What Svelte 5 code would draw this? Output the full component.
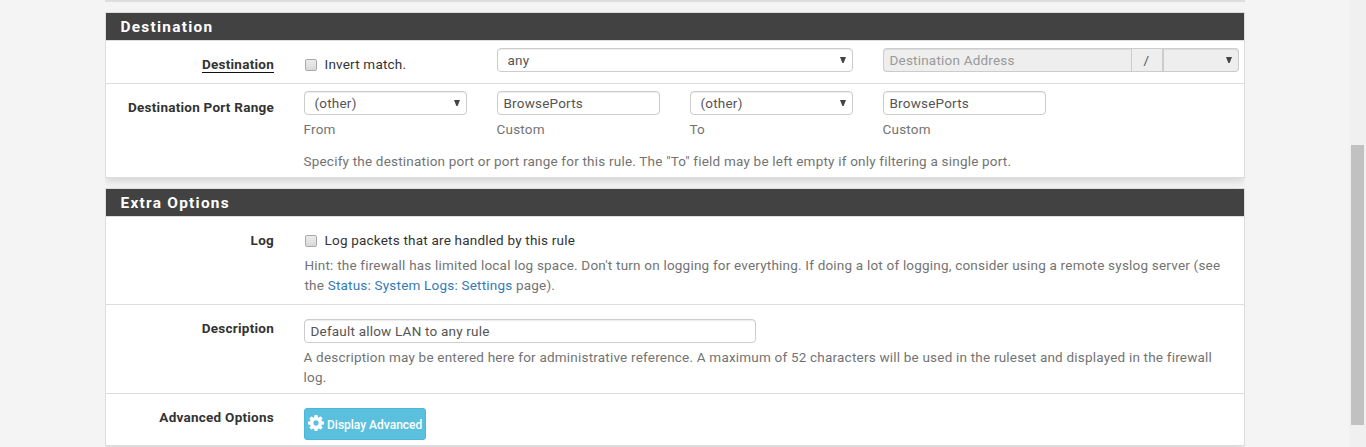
<script>
  const ports = [
    { kind: 'select', value: '(other)', help: 'From' },
    { kind: 'input', value: 'BrowsePorts', help: 'Custom' },
    { kind: 'select', value: '(other)', help: 'To' },
    { kind: 'input', value: 'BrowsePorts', help: 'Custom' }
  ];
</script>

{#snippet arrow()}
  <svg class="arrow" width="6" height="6" viewBox="0 0 6 6"><path d="M0 0H6L3.6 6H2.4Z" fill="#444" /></svg>
{/snippet}

<div class="page">
  <main>
    <div class="previous"></div>

    <section class="panel">
      <h2>Destination</h2>
      <div class="row r-dest">
        <div class="label"><span class="required">Destination</span></div>
        <div class="fields">
          <div class="check"><i class="box"></i><span>Invert match.</span></div>
          <div class="control wide select"><span>any</span>{@render arrow()}</div>
          <div class="group">
            <div class="control address">Destination Address</div>
            <div class="slash">/</div>
            <div class="control select mask"><span></span>{@render arrow()}</div>
          </div>
        </div>
      </div>
      <div class="row r-ports">
        <div class="label">Destination Port Range</div>
        <div>
          <div class="fields">
            {#each ports as port}
              <div>
                {#if port.kind === 'select'}
                  <div class="control select"><span>{port.value}</span>{@render arrow()}</div>
                {:else}
                  <div class="control">{port.value}</div>
                {/if}
                <div class="help">{port.help}</div>
              </div>
            {/each}
          </div>
          <p class="note">Specify the destination port or port range for this rule. The "To" field may be left empty if only filtering a single port.</p>
        </div>
      </div>
    </section>

    <section class="panel">
      <h2>Extra Options</h2>
      <div class="row r-log">
        <div class="label">Log</div>
        <div>
          <div class="check"><i class="box"></i><span>Log packets that are handled by this rule</span></div>
          <div class="help hint">Hint: the firewall has limited local log space. Don't turn on logging for everything. If doing a lot of logging, consider using a remote syslog server (see<br />the <span class="link">Status: System Logs: Settings</span> page).</div>
        </div>
      </div>
      <div class="row r-desc">
        <div class="label">Description</div>
        <div>
          <div class="control description">Default allow LAN to any rule</div>
          <div class="help">A description may be entered here for administrative reference. A maximum of 52 characters will be used in the ruleset and displayed in the firewall<br />log.</div>
        </div>
      </div>
      <div class="row r-adv">
        <div class="label">Advanced Options</div>
        <div>
          <button type="button">
            <svg width="16" height="16" viewBox="0 128 1536 1536" fill="#fff">
              <path d="M1024 896q0-106-75-181t-181-75-181 75-75 181 75 181 181 75 181-75 75-181zm512-109v222q0 12-8 23t-20 13l-185 28q-19 54-39 91 35 50 107 138 10 12 10 25t-9 23q-27 37-99 108t-94 71q-12 0-26-9l-138-108q-44 23-91 38-16 136-29 186-7 28-36 28h-222q-14 0-24.5-8.5t-11.5-21.5l-28-184q-49-16-90-37l-141 107q-10 9-25 9-14 0-25-11-126-114-165-168-7-10-7-23 0-12 8-23 15-21 51-66.5t54-70.5q-27-50-41-99l-183-27q-13-2-21-12.5t-8-23.5v-222q0-12 8-23t19-13l186-28q14-46 39-92-40-57-107-138-10-12-10-24 0-10 9-23 26-36 98.5-107.5t94.5-71.5q13 0 26 10l138 107q44-23 91-38 16-136 29-186 7-28 36-28h222q14 0 24.5 8.5t11.5 21.5l28 184q49 16 90 37l142-107q9-9 24-9 13 0 25 10 129 119 165 170 7 8 7 22 0 12-8 23-15 21-51 66.5t-54 70.5q26 50 41 98l183 28q13 2 21 12.5t8 23.5z" />
            </svg>
            <span>Display Advanced</span>
          </button>
        </div>
      </div>
    </section>
  </main>
  <div class="scrollbar"><div class="thumb"></div></div>
</div>

<style>
  :global(body) { margin: 0; overflow: hidden; background: #f4f4f4; }
  .page {
    display: flex;
    justify-content: space-between;
    height: 447px;
    overflow: hidden;
    font: 13.5px/20px Roboto, "Liberation Sans", sans-serif;
    letter-spacing: 0.205px;
    color: #333;
  }
  .page :global(*) { box-sizing: border-box; }
  main { width: 1140px; margin-left: 105px; overflow: hidden; }
  .previous {
    height: 2px;
    margin-bottom: 10px;
    background: #ddd;
    box-shadow: 0 4px 8px -1px rgba(0, 0, 0, 0.14);
  }
  .panel {
    position: relative;
    margin-bottom: 10px;
    border: 1px solid #ddd;
    background: #fff;
    box-shadow: 0 4px 8px -1px rgba(0, 0, 0, 0.14);
  }
  h2 {
    height: 28px;
    margin: 0;
    padding-left: 14.5px;
    border-bottom: 1px solid #ddd;
    background: #424242;
    background-clip: padding-box;
    color: #fff;
    font-size: 15.4px;
    line-height: 28px;
    font-weight: 700;
    letter-spacing: 1.27px;
  }
  .row {
    display: grid;
    grid-template-columns: 168px 936px;
    column-gap: 30px;
    border-bottom: 1px solid #ddd;
  }
  .row:last-child { border-bottom: 0; }
  .r-dest { height: 43px; padding-top: 7px; }
  .r-ports { height: 93px; padding-top: 7px; }
  .r-log { height: 88px; padding-top: 7px; }
  .r-desc { height: 89px; padding-top: 14px; }
  .r-adv { height: 51px; padding-top: 14px; }
  .label { padding-top: 6px; text-align: right; font-weight: 700; letter-spacing: 0.25px; }
  .r-desc .label, .r-adv .label { margin-top: -1px; padding-top: 0; }
  .required { display: inline-block; height: 19px; border-bottom: 1px solid #111; }
  .fields { display: grid; grid-template-columns: repeat(4, 163px); column-gap: 30px; align-items: start; }
  .fields .wide { grid-column: 2 / 4; }
  .r-dest .fields { grid-template-columns: 163px 163px 163px 356px; }
  .control {
    height: 24px;
    padding: 0 6px 0 5.5px;
    border: 1px solid #ccc;
    border-radius: 4px;
    background: #fff;
    box-shadow: inset 0 1px 1px rgba(0, 0, 0, 0.075);
    color: #555;
    line-height: 23px;
    white-space: nowrap;
  }
  .select { display: flex; justify-content: space-between; padding-left: 9.5px; }
  .arrow { flex: none; margin-top: 8px; }
  .group { display: flex; height: 24px; }
  .group .control { background: #eee; }
  .address { flex: 1; border-right: 0; border-radius: 4px 0 0 4px; }
  .group .address { color: #999; }
  .slash {
    width: 31px;
    height: 24px;
    border: 1px solid #ccc;
    border-right: 0;
    background: #eee;
    color: #555;
    padding-right: 1px;
    text-align: center;
    line-height: 22px;
  }
  .group .mask { width: 77px; border-left-width: 2px; border-radius: 0 4px 4px 0; }
  .check { display: flex; gap: 7.5px; padding: 6px 0 0 1px; white-space: nowrap; }
  .box {
    width: 12px;
    height: 12px;
    margin-top: 5px;
    border: 1px solid #a9a9a9;
    border-radius: 2px;
    background: linear-gradient(#ececec, #d9d9d9);
  }
  .help, .note { color: #737373; white-space: nowrap; }
  .help { margin: 4px 0 0 -0.5px; }
  .hint { padding-left: 1px; margin-top: 5px; }
  .note { margin: 12px 0 0 -0.5px; }
  .link { color: #337ab7; }
  .description { width: 452px; }
  button {
    display: flex;
    gap: 3px;
    width: 122px;
    height: 32px;
    padding: 6px 0 0 3px;
    border: 1px solid #46b8da;
    border-radius: 3px;
    background: #5bc0de;
    color: #fff;
    font: 500 12px/20px Roboto, sans-serif;
    white-space: nowrap;
  }
  button svg { flex: none; }
  .scrollbar { width: 17px; padding: 145px 2px 0; background: #f0f0f0; }
  .thumb { width: 13px; height: 280px; background: #c1c1c1; }
</style>
